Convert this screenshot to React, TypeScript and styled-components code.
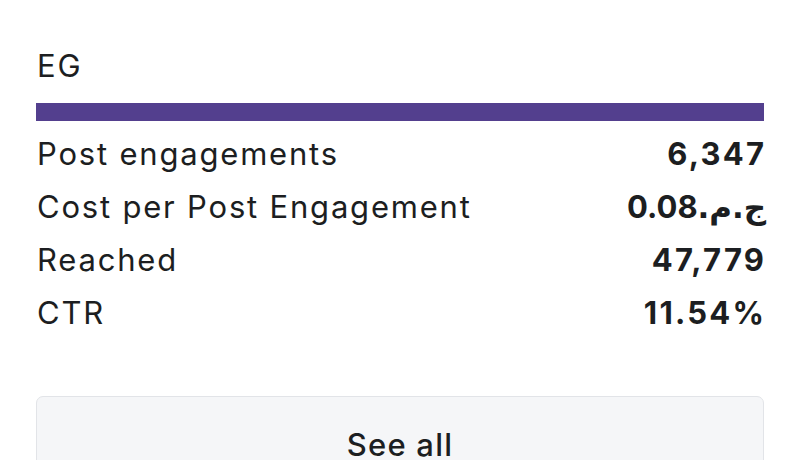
import React from "react";
import styled, { createGlobalStyle } from "styled-components";

const Global = createGlobalStyle`
  html, body { margin: 0; padding: 0; background: #ffffff; }
  body { font-family: Inter, "Noto Sans", "DejaVu Sans", sans-serif; color: #1c1e21; }
`;

const Card = styled.div`
  width: 800px;
  height: 460px;
  overflow: hidden;
  box-sizing: border-box;
  padding: 44px 36px 0 36px;
  display: flex;
  flex-direction: column;
  & > * { flex-shrink: 0; }
`;

const Title = styled.div`
  font-size: 31px;
  line-height: 44px;
  font-weight: 400;
  letter-spacing: 1.8px;
  padding-left: 1px;
`;

const Bar = styled.div`
  margin-top: 15px;
  height: 18px;
  width: 728px;
  background: #533f8e;
`;

const Rows = styled.div`
  margin-top: 6px;
  display: flex;
  flex-direction: column;
`;

const Row = styled.div`
  display: flex;
  justify-content: space-between;
  align-items: center;
  height: 53px;
  font-size: 31px;
  line-height: 53px;
  letter-spacing: 1.8px;
`;

const Label = styled.span`
  font-weight: 400;
  padding-left: 1px;
`;

const Value = styled.span`
  font-weight: 650;
  letter-spacing: 2.2px;
  margin-right: -2.2px;
`;

const Currency = styled.span`
  unicode-bidi: isolate;
  letter-spacing: 0;
  font-family: "DejaVu Sans", "Noto Sans", sans-serif;
  font-weight: 700;
`;

const Button = styled.button`
  margin-top: 57px;
  width: 728px;
  height: 96px;
  box-sizing: border-box;
  background: #f5f6f8;
  border: 1px solid #e2e4e8;
  border-radius: 7px;
  font-family: Inter, "Noto Sans", sans-serif;
  font-size: 31px;
  font-weight: 500;
  letter-spacing: 1.2px;
  color: #1c1e21;
  display: flex;
  justify-content: center;
  align-items: center;
  padding: 0;
`;

const metrics: { label: string; value: React.ReactNode }[] = [
  { label: "Post engagements", value: "6,347" },
  {
    label: "Cost per Post Engagement",
    value: (
      <>
        0.08<Currency dir="rtl">ج.م.</Currency>
      </>
    ),
  },
  { label: "Reached", value: "47,779" },
  { label: "CTR", value: "11.54%" },
];

export default function App() {
  return (
    <>
      <Global />
      <Card>
        <Title>EG</Title>
        <Bar />
        <Rows>
          {metrics.map((m) => (
            <Row key={m.label}>
              <Label>{m.label}</Label>
              <Value>{m.value}</Value>
            </Row>
          ))}
        </Rows>
        <Button>See all</Button>
      </Card>
    </>
  );
}
